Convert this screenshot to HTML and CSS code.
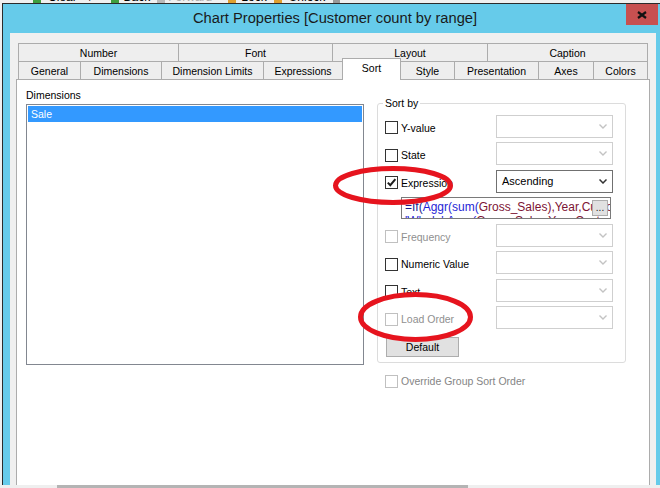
FILE: index.html
```html
<!DOCTYPE html>
<html>
<head>
<meta charset="utf-8">
<link rel="stylesheet" href="styles.css">
</head>
<body>
<div class="screen">
  <div class="toolbar">
    <span class="ic green m33"></span><span class="tt m7">Clear</span><span class="tt m7">▼</span>
    <span class="ic green m15"></span><span class="tt m5">Back</span>
    <span class="ic grey m7"></span><span class="tt grey m3">Forward</span>
    <span class="ic orange m16"></span><span class="tt m5">Lock</span>
    <span class="ic orange m7"></span><span class="tt m7">Unlock</span>
    <span class="blk m8"></span>
  </div>
  <div class="window">
    <div class="titlebar">
      <div class="title">Chart Properties [Customer count by range]</div>
      <div class="close"><svg width="10" height="8" viewBox="0 0 10 8"><path d="M1 1 L9 7 M9 1 L1 7" stroke="#111" stroke-width="2.2" fill="none"/></svg></div>
    </div>
    <div class="client">
      <div class="tabs">
        <div class="tabrow row1">
          <div class="tab first w161">Number</div>
          <div class="tab w155">Font</div>
          <div class="tab w156">Layout</div>
          <div class="tab w161">Caption</div>
        </div>
        <div class="tabrow row2">
          <div class="tab first w63">General</div>
          <div class="tab w82">Dimensions</div>
          <div class="tab w103">Dimension Limits</div>
          <div class="tab w80">Expressions</div>
          <div class="tab active w59">Sort</div>
          <div class="tab w55">Style</div>
          <div class="tab w85">Presentation</div>
          <div class="tab w56">Axes</div>
          <div class="tab w55">Colors</div>
        </div>
      </div>
      <div class="panel">
        <div class="leftcol">
          <div class="lbl">Dimensions</div>
          <div class="listbox">
            <div class="item sel">Sale</div>
          </div>
        </div>
        <div class="rightcol">
          <fieldset class="group">
            <legend>Sort by</legend>
            <div class="rows">
              <div class="row">
                <div class="chk"><span class="box"></span><span>Y-value</span></div>
                <div class="combo"><span></span><svg class="chev" width="8" height="5" viewBox="0 0 8 5"><path d="M0.5 0.5 L4 4 L7.5 0.5" stroke="#c3c3c3" stroke-width="1.4" fill="none"/></svg></div>
              </div>
              <div class="row">
                <div class="chk"><span class="box"></span><span>State</span></div>
                <div class="combo"><span></span><svg class="chev" width="8" height="5" viewBox="0 0 8 5"><path d="M0.5 0.5 L4 4 L7.5 0.5" stroke="#c3c3c3" stroke-width="1.4" fill="none"/></svg></div>
              </div>
              <div class="row">
                <div class="chk"><span class="box"><svg width="11" height="11" viewBox="0 0 11 11"><path d="M1.8 5.6 L4.3 8.2 L9.4 2.2" stroke="#1e1e1e" stroke-width="2" fill="none"/></svg></span><span>Expression</span></div>
                <div class="combo on"><span>Ascending</span><svg class="chev" width="8" height="5" viewBox="0 0 8 5"><path d="M0.5 0.5 L4 4 L7.5 0.5" stroke="#333" stroke-width="1.5" fill="none"/></svg></div>
              </div>
              <div class="editrow">
                <div class="edit">
                  <div class="line"><span class="op">=If(</span><span class="fn">Aggr(sum(</span><span class="fld">Gross_Sales),Year,Customer)</span></div>
                  <div class="line"><span class="fn">'Whole',Aggr(</span><span class="fld">Gross_Sales,Year,Cust</span></div>
                  <div class="btn">...</div>
                </div>
              </div>
              <div class="row">
                <div class="chk dis"><span class="box"></span><span>Frequency</span></div>
                <div class="combo"><span></span><svg class="chev" width="8" height="5" viewBox="0 0 8 5"><path d="M0.5 0.5 L4 4 L7.5 0.5" stroke="#c3c3c3" stroke-width="1.4" fill="none"/></svg></div>
              </div>
              <div class="row">
                <div class="chk"><span class="box"></span><span>Numeric Value</span></div>
                <div class="combo"><span></span><svg class="chev" width="8" height="5" viewBox="0 0 8 5"><path d="M0.5 0.5 L4 4 L7.5 0.5" stroke="#c3c3c3" stroke-width="1.4" fill="none"/></svg></div>
              </div>
              <div class="row">
                <div class="chk"><span class="box"></span><span>Text</span></div>
                <div class="combo"><span></span><svg class="chev" width="8" height="5" viewBox="0 0 8 5"><path d="M0.5 0.5 L4 4 L7.5 0.5" stroke="#c3c3c3" stroke-width="1.4" fill="none"/></svg></div>
              </div>
              <div class="row">
                <div class="chk dis"><span class="box"></span><span>Load Order</span></div>
                <div class="combo"><span></span><svg class="chev" width="8" height="5" viewBox="0 0 8 5"><path d="M0.5 0.5 L4 4 L7.5 0.5" stroke="#c3c3c3" stroke-width="1.4" fill="none"/></svg></div>
              </div>
            </div>
            <div class="defbtn">Default</div>
          </fieldset>
          <div class="override dis"><span class="box"></span><span>Override Group Sort Order</span></div>
        </div>
      </div>
    </div>
  </div>
  <div class="hscroll"><div class="thumb"></div></div>
  <svg class="annot" width="660" height="488" viewBox="0 0 660 488">
    <ellipse cx="393" cy="185.5" rx="57.5" ry="17" fill="none" stroke="#e6141e" stroke-width="5"/>
    <ellipse cx="415.5" cy="317" rx="55" ry="22.5" fill="none" stroke="#e6141e" stroke-width="5"/>
  </svg>
</div>
</body>
</html>
```
FILE: styles.css
```css
* { box-sizing: border-box; }
html, body { margin: 0; padding: 0; }
body {
  width: 660px;
  height: 488px;
  overflow: hidden;
  background: #f0f0f0;
  font-family: "Liberation Sans", Arial, sans-serif;
  font-size: 10.5px;
  color: #000;
}
.screen {
  position: relative;
  width: 660px;
  height: 488px;
  display: flex;
  flex-direction: column;
  overflow: hidden;
}

/* background toolbar sliver */
.toolbar {
  height: 3px;
  flex: none;
  overflow: hidden;
  display: flex;
  align-items: flex-end;
  background: #f0f0f0;
  font-size: 12px;
  line-height: 11px;
}
.toolbar .ic { width: 8px; height: 9px; flex: none; }
.toolbar .green { background: #3f9f3f; }
.toolbar .grey { background: #b9b9b9; }
.toolbar .orange { background: #e0a030; }
.toolbar .blk { width: 7px; height: 9px; background: #9a9a9a; }
.toolbar .tt { white-space: nowrap; }
.toolbar .tt.grey { background: none; color: #a9a9a9; }
.m3 { margin-left: 3px; }
.m5 { margin-left: 5px; }
.m7 { margin-left: 7px; }
.m8 { margin-left: 8px; }
.m15 { margin-left: 15px; }
.m16 { margin-left: 16px; }
.m33 { margin-left: 33px; }

/* dialog window */
.window {
  flex: 1;
  min-height: 0;
  margin-left: 2px;
  border-left: 1px solid #2b2b2b;
  border-top: 1px solid #2b2b2b;
  background: #66cbea;
  padding: 0 4px 0 7px;
  display: flex;
  flex-direction: column;
}
.titlebar {
  height: 29px;
  flex: none;
  position: relative;
  display: flex;
  align-items: center;
  justify-content: center;
}
.title {
  font-size: 14.7px;
  color: #1a1a1a;
  margin-top: -1px;
  margin-left: 4px;
}
.close {
  position: absolute;
  top: 0;
  right: -2px;
  width: 32px;
  height: 21px;
  background: #c75050;
  display: flex;
  align-items: center;
  justify-content: center;
}

.client {
  flex: 1;
  min-height: 0;
  background: #f0f0f0;
  padding: 10px 6px 0;
  display: flex;
  flex-direction: column;
}
.tabs { margin: 0 2px; flex: none; }
.tabrow { display: flex; height: 18px; }
.tab {
  border: 1px solid #acacac;
  border-bottom: none;
  margin-left: -1px;
  background: #eeeeee;
  display: flex;
  align-items: center;
  justify-content: center;
  white-space: nowrap;
  padding-top: 1px;
  flex: none;
}
.tab.first { margin-left: 0; }
.w55 { width: 55px; }
.w56 { width: 56px; }
.w59 { width: 59px; }
.w63 { width: 63px; }
.w80 { width: 80px; }
.w82 { width: 82px; }
.w85 { width: 85px; }
.w103 { width: 103px; }
.w155 { width: 155px; }
.w156 { width: 156px; }
.w161 { width: 161px; }
.tab.active {
  position: relative;
  z-index: 1;
  background: #fff;
  margin-top: -3px;
  height: 22px;
  padding-top: 0;
  padding-bottom: 3px;
}

.panel {
  flex: 1;
  min-height: 0;
  background: #fff;
  border: 1px solid #acacac;
  border-bottom: none;
  display: flex;
  padding-left: 9px;
}
.leftcol { width: 338px; flex: none; padding-top: 9px; }
.lbl { line-height: 13px; height: 13px; }
.listbox {
  margin-top: 2px;
  height: 261px;
  border: 1px solid #828790;
  padding: 1px;
}
.item { height: 16px; line-height: 16px; padding-left: 3px; }
.item.sel { background: #3399ff; color: #fff; }

.rightcol { margin-left: 13px; padding-top: 17px; flex: none; }
.group {
  margin: 0;
  width: 249px;
  min-width: 0;
  border: 1px solid #dcdcdc;
  border-radius: 3px;
  padding: 4.5px 11px 5px 7px;
}
.group legend {
  padding: 0 2px;
  margin-left: -2px;
  line-height: 13px;
}
.rows { display: flex; flex-direction: column; gap: 4.5px; }
.row { display: flex; height: 23px; }
.chk {
  width: 111px;
  flex: none;
  display: flex;
  align-items: center;
  gap: 3px;
  padding-top: 3px;
  white-space: nowrap;
}
.box {
  width: 13px;
  height: 13px;
  flex: none;
  border: 1px solid #333;
  background: #fff;
  display: flex;
  align-items: center;
  justify-content: center;
}
.dis { color: #8f8f8f; }
.dis .box { border-color: #c0c0c0; }
.combo {
  width: 117px;
  height: 23px;
  flex: none;
  border: 1px solid #cfcfcf;
  background: #fff;
  display: flex;
  align-items: center;
  justify-content: space-between;
  padding: 0 5px 0 5px;
  font-size: 11px;
}
.combo.on { border-color: #707070; }
.chev { flex: none; }

.editrow { display: flex; height: 22px; }
.edit {
  position: relative;
  margin-left: 16px;
  width: 210px;
  height: 22px;
  border: 1px solid #7a7a7a;
  overflow: hidden;
  font-size: 12px;
  line-height: 14px;
  padding: 2px 0 0 3px;
  white-space: nowrap;
  background: #fff;
}
.edit .op { color: #1c1c8c; }
.edit .fn { color: #1f1fd6; }
.edit .fld { color: #7d1434; }
.edit .btn {
  position: absolute;
  right: 2px;
  top: 2px;
  width: 16px;
  height: 16px;
  background: #e1e1e1;
  border: 1px solid #adadad;
  font-size: 10px;
  line-height: 14px;
  text-align: center;
  color: #222;
}
.defbtn {
  margin-top: 7.5px;
  margin-left: 1px;
  width: 73px;
  height: 20px;
  background: #e1e1e1;
  border: 1px solid #adadad;
  display: flex;
  align-items: center;
  justify-content: center;
}
.override {
  margin-top: 12px;
  display: flex;
  align-items: center;
  gap: 3px;
  padding-left: 8px;
  color: #858585;
}

.hscroll { height: 3px; flex: none; background: #efefef; }
.thumb { margin-left: 57px; width: 411px; height: 3px; background: #b4b4b4; }

.annot {
  position: absolute;
  left: 0;
  top: 0;
  pointer-events: none;
}
```
